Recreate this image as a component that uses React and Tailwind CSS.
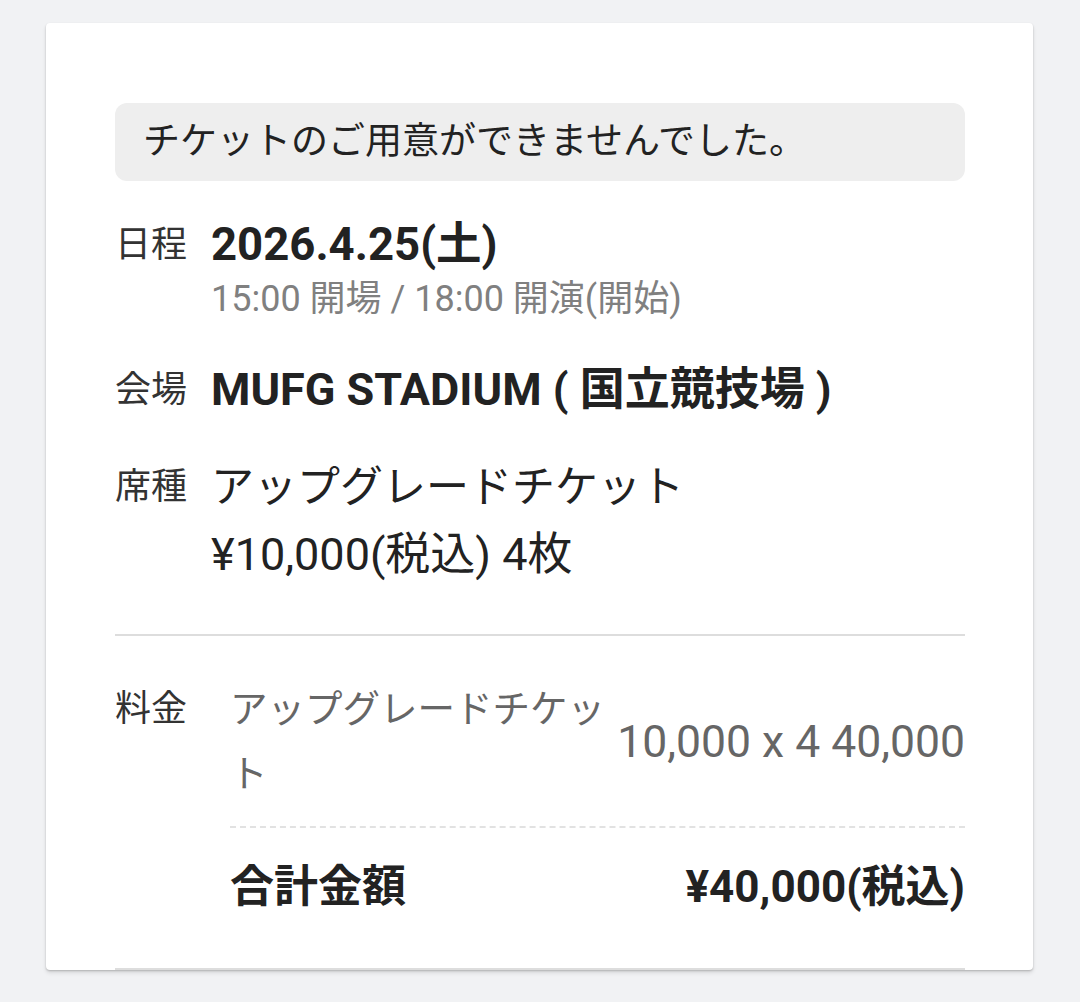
export default function App() {
  return (
    <div className="min-h-[1002px] bg-[#f1f2f4] pt-[23px] pl-[46px] pr-[47px] font-['Roboto','Noto_Sans_CJK_JP',sans-serif]">
      <div className="rounded-[4px] bg-white pt-[80px] pl-[69px] pr-[68px] shadow-[0_1px_2px_rgba(0,0,0,0.2),0_3px_4px_rgba(0,0,0,0.1)]">
        <div className="flex h-[78px] items-center rounded-[12px] bg-[#eeeeee] pl-[28px] text-[37px] text-[#222]">
          チケットのご用意ができませんでした。
        </div>

        <div className="mt-[36px] flex">
          <div className="w-[96px] shrink-0 text-[36px] leading-[56px] text-[#333]">日程</div>
          <div>
            <div className="text-[45.5px] font-bold leading-[56px] text-[#222]">2026.4.25(土)</div>
            <div className="text-[36px] leading-[52px] text-[#808080]">15:00 開場 / 18:00 開演(開始)</div>
          </div>
        </div>

        <div className="mt-[37px] flex">
          <div className="w-[96px] shrink-0 text-[36px] leading-[56px] text-[#333]">会場</div>
          <div className="text-[45px] font-bold leading-[56px] text-[#222]">MUFG STADIUM ( 国立競技場 )</div>
        </div>

        <div className="mt-[36px] flex">
          <div className="w-[96px] shrink-0 text-[36px] leading-[67px] text-[#333]">席種</div>
          <div className="text-[44px] leading-[67px] text-[#222]">
            <div className="text-[43px]">アップグレードチケット</div>
            <div className="text-[45px]">¥10,000(税込) 4枚</div>
          </div>
        </div>

        <div className="mt-[46px] h-[2px] bg-[#dddddd]"></div>

        <div className="mt-[41px] flex">
          <div className="w-[115px] shrink-0 text-[36px] leading-[65px] text-[#333]">料金</div>
          <div className="min-w-0 flex-1">
            <div className="flex items-center justify-between">
              <div className="w-[385px] shrink-0 text-[37.5px] leading-[65px] text-[#666]">アップグレードチケット</div>
              <div className="shrink-0 whitespace-nowrap text-[44.5px] leading-[56px] text-[#666]">10,000 x 4 40,000</div>
            </div>
            <div className="mt-[19px] border-t-2 border-dashed border-[#e2e2e2]"></div>
            <div className="mt-[31px] flex justify-between text-[44px] font-bold leading-[56px] text-[#222]">
              <span>合計金額</span>
              <span>¥40,000(税込)</span>
            </div>
          </div>
        </div>

        <div className="mt-[53px] h-[2px] bg-[#dddddd]"></div>
      </div>
    </div>
  );
}
